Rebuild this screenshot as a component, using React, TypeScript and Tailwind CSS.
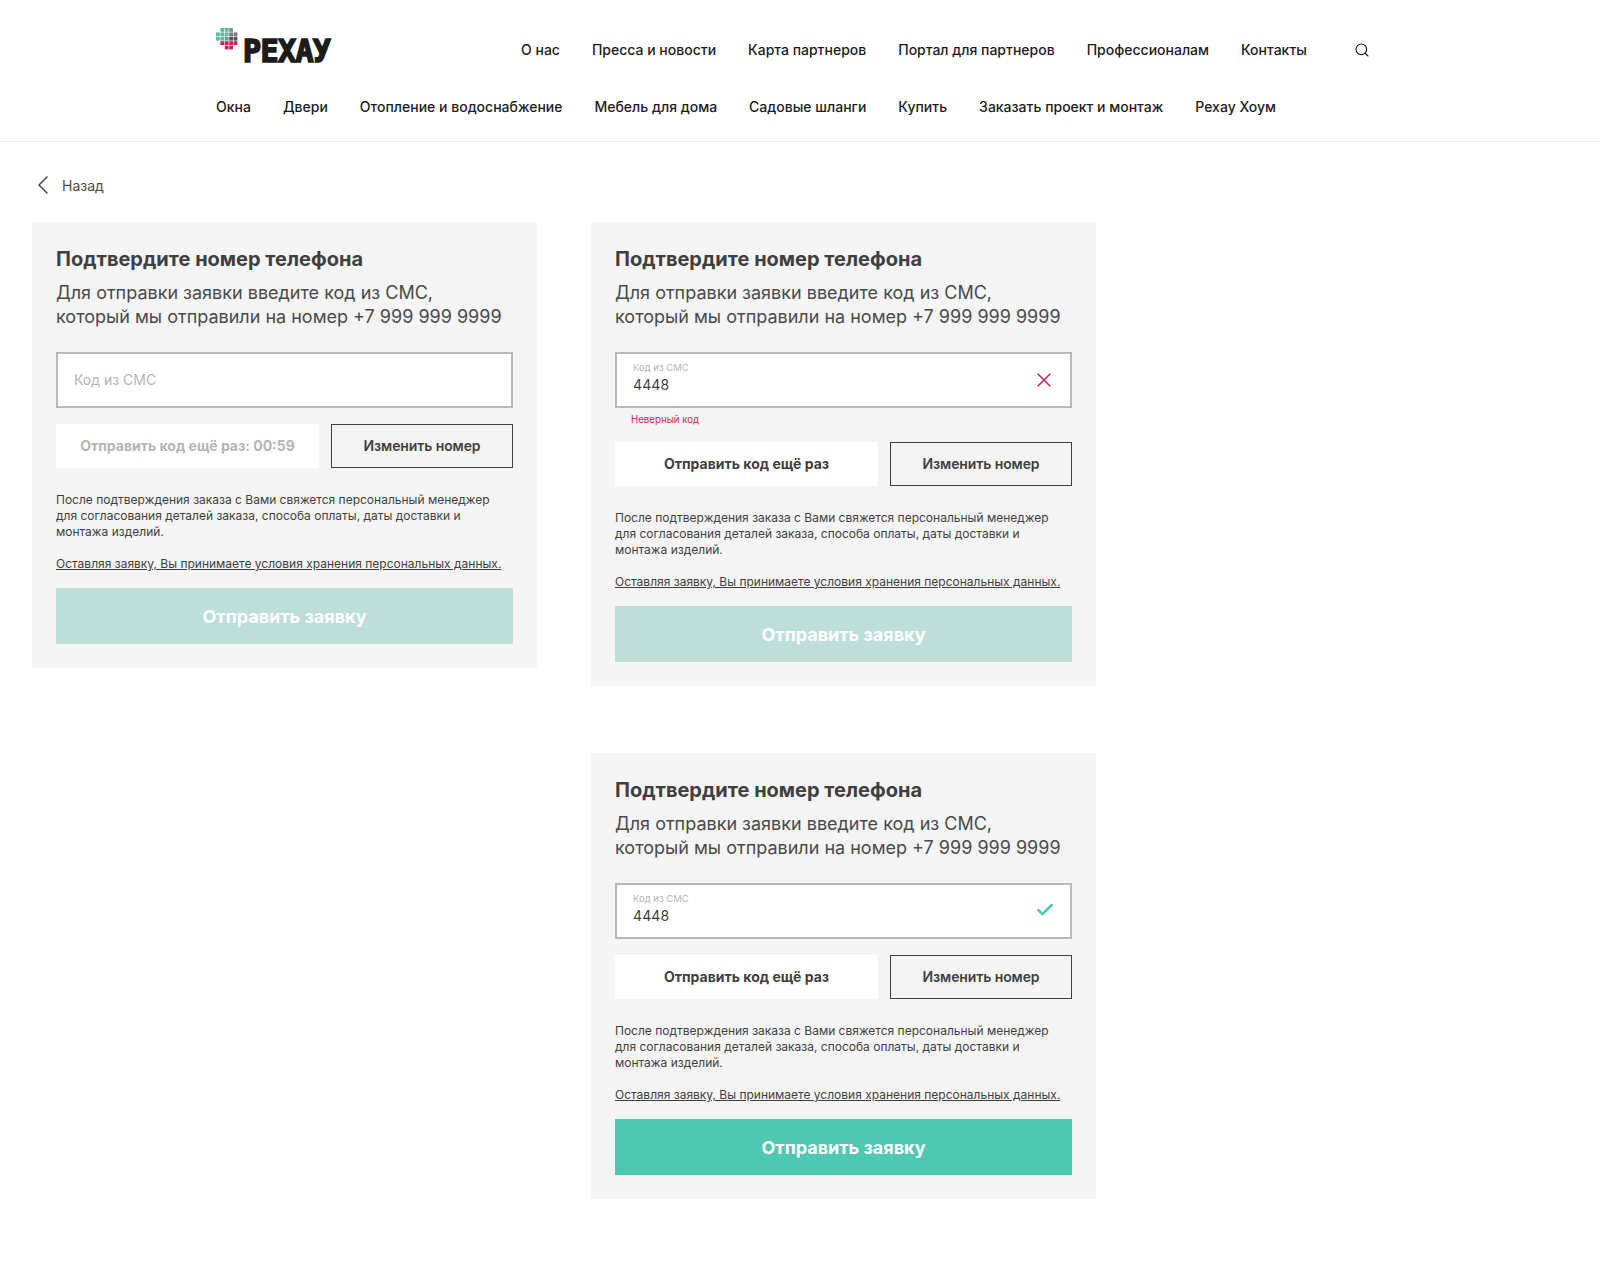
import { Check, ChevronLeft, Search, X } from "lucide-react";

const topNav = ["О нас", "Пресса и новости", "Карта партнеров", "Портал для партнеров", "Профессионалам", "Контакты"];
const mainNav = ["Окна", "Двери", "Отопление и водоснабжение", "Мебель для дома", "Садовые шланги", "Купить", "Заказать проект и монтаж", "Рехау Хоум"];

const logoDots = [
  ["", "#5fb8a4", "#5fb8a4", "#8a8a8a", ""],
  ["#5fb8a4", "#5fb8a4", "#5fb8a4", "#7a7a7a", "#7a7a7a"],
  ["#5fb8a4", "#5fb8a4", "#6a9a90", "#555", "#555"],
  ["", "#d81b60", "#d81b60", "#d81b60", "#d81b60"],
  ["", "", "#d81b60", "#d81b60", ""],
];

function Logo() {
  return (
    <div className="relative h-[40px] w-[115px]">
      <svg className="absolute top-[-1px] left-0" width="22" height="22" viewBox="0 0 22 22">
        {logoDots.map((row, y) =>
          row.map((c, x) => c && <rect key={`${x}-${y}`} x={x * 4.4} y={y * 4.4} width="3.8" height="3.8" fill={c} />)
        )}
      </svg>
      <span className="absolute top-[5px] left-[27px] scale-y-[1.08] font-['DejaVu_Sans_Mono'] text-[30px] leading-[34px] font-bold tracking-[-0.6px] text-[#1c1c1c] [-webkit-text-stroke:1.6px_#1c1c1c]">
        РЕХАУ
      </span>
    </div>
  );
}

function Card({ state }: { state: "idle" | "error" | "success" }) {
  const filled = state !== "idle";
  return (
    <div className="flex w-[505px] flex-col bg-[#f5f5f5] px-6 pt-[25px] pb-6 text-[#3f3f3f]">
      <h2 className="text-[20px] leading-6 font-bold">Подтвердите номер телефона</h2>
      <p className="mt-[10px] text-[18px] leading-6 text-[#4a4a4a]">
        Для отправки заявки введите код из СМС,
        <br />
        который мы отправили на номер +7 999 999 9999
      </p>
      <div className="mt-[23px] flex h-[56px] items-center justify-between border-2 border-[#b8b8b8] bg-white pr-[15px] pl-[16px]">
        {filled ? (
          <div className="flex flex-col pb-[4px]">
            <span className="text-[9.5px] leading-3 text-[#b5b5b5]">Код из СМС</span>
            <span className="mt-[2.5px] text-[14px] leading-[18px] tracking-[0.1px]">4448</span>
          </div>
        ) : (
          <span className="pb-[2px] text-[14px] text-[#b5b5b5]">Код из СМС</span>
        )}
        {state === "error" && <X className="-mr-px text-[#e0195c]" size={24} strokeWidth={1.5} />}
        {state === "success" && <Check className="mb-[2px] text-[#4fc8b1]" size={20} strokeWidth={3} />}
      </div>
      {state === "error" && <div className="mt-[4px] mb-[-1px] pl-[16px] text-[9.7px] leading-[15px] text-[#d81b60]">Неверный код</div>}
      <div className="mt-[16px] flex gap-3">
        <button className={`h-[44px] w-[263px] bg-white pb-[2px] text-[14px] font-bold ${state === "idle" ? "text-[#b5b5b5]" : "text-[#3f3f3f]"}`}>
          {state === "idle" ? "Отправить код ещё раз: 00:59" : "Отправить код ещё раз"}
        </button>
        <button className="h-[44px] flex-1 border border-[#3f3f3f] pb-[2px] text-[14px] font-semibold tracking-[-0.1px] text-[#3f3f3f]">Изменить номер</button>
      </div>
      <p className="mt-[24px] text-[12px] leading-4">
        После подтверждения заказа с Вами свяжется персональный менеджер
        <br />
        для согласования деталей заказа, способа оплаты, даты доставки и
        <br />
        монтажа изделий.
      </p>
      <a className="mt-[16px] text-[12px] leading-4 whitespace-nowrap underline">Оставляя заявку, Вы принимаете условия хранения персональных данных.</a>
      <button className={`mt-[16px] h-[56px] text-[18px] font-bold text-white ${state === "success" ? "bg-[#4fc8b1]" : "bg-[#bddfd8]"}`}>
        Отправить заявку
      </button>
    </div>
  );
}

export default function App() {
  return (
    <div className="h-[1284px] bg-white font-['Inter',sans-serif]">
      <header className="h-[142px] border-b border-[#e8e8e8] pl-[216px]">
        <div className="flex h-[86px] items-center pt-[12px]">
          <Logo />
          <nav className="ml-[190px] flex gap-8 text-[14px] font-medium text-[#1c1c1c]">
            {topNav.map((item) => (
              <span key={item}>{item}</span>
            ))}
          </nav>
          <Search className="mt-[2px] ml-[47px] text-[#1c1c1c]" size={16} strokeWidth={1.7} />
        </div>
        <nav className="mt-[10px] flex gap-8 text-[14px] font-medium text-[#1c1c1c]">
          {mainNav.map((item) => (
            <span key={item}>{item}</span>
          ))}
        </nav>
      </header>
      <main className="flex gap-[54px] pl-[32px]">
        <div className="flex flex-col">
          <div className="flex h-[80px] items-center pt-[6px] text-[14px] text-[#4a4a4a]">
            <ChevronLeft className="-ml-[5px]" size={32} strokeWidth={1.15} />
            <span className="ml-[3px]">Назад</span>
          </div>
          <Card state="idle" />
        </div>
        <div className="flex flex-col gap-[67px] pt-[80px]">
          <Card state="error" />
          <Card state="success" />
        </div>
      </main>
    </div>
  );
}
